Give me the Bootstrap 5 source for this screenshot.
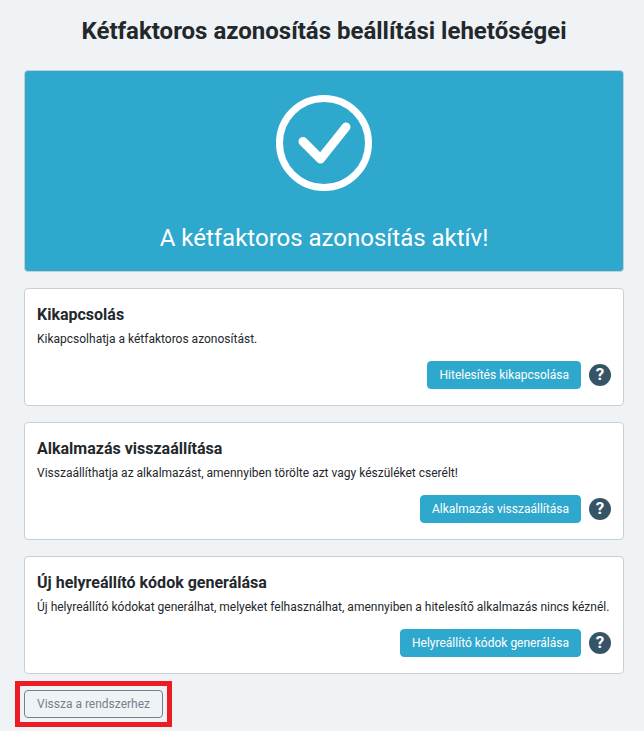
<!DOCTYPE html>
<html lang="hu">
<head>
  <meta charset="UTF-8">
  <title>Kétfaktoros azonosítás</title>
  <meta name="viewport" content="width=device-width, initial-scale=1">
  <link rel="stylesheet" href="https://cdn.jsdelivr.net/npm/bootstrap@5.3.3/dist/css/bootstrap.min.css">
  <style>
    html, body {
      height: 100%;
      overflow: hidden;
    }

    body {
      background-color: #f0f3f5;
      color: #23282c;
      font-family: Roboto, sans-serif;
      font-size: 12px;
    }

    .page-wrap {
      padding: 0 20px 0 24px;
    }

    .page-title {
      font-family: Roboto, sans-serif;
      font-size: 24px;
      font-weight: 700;
      line-height: 29px;
      margin: 0;
      padding: 17px 0 24px;
    }

    .hero-box {
      background-color: #2fa8cd;
      border: 1px solid #c8ced3;
      border-radius: 4px;
      height: 202px;
      margin-bottom: 16px;
      padding-top: 23px;
    }

    .hero-text {
      font-size: 24px;
      line-height: 29px;
      margin-top: 32px;
    }

    .opt-card {
      background-color: #fff;
      border: 1px solid #c8ced3;
      border-radius: 4px;
      height: 118px;
      margin-bottom: 16px;
      padding: 16px 12px 0;
    }

    .opt-title {
      font-family: Roboto, sans-serif;
      font-size: 16px;
      font-weight: 700;
      line-height: 19px;
      margin: 0 0 8px;
    }

    .opt-text {
      line-height: 15px;
      margin: 0 0 14px;
    }

    .btn-kek {
      background-color: #2fa8cd;
      border: 1px solid #2fa8cd;
      border-radius: 4px;
      color: #fff;
      font-size: 12px;
      font-weight: 400;
      line-height: 18px;
      padding: 4px 11px;
    }

    .btn-kek:hover {
      background-color: #2793b5;
      color: #fff;
    }

    .help-dot {
      align-items: center;
      background-color: #355566;
      border-radius: 50%;
      color: #fff;
      display: flex;
      font-size: 17px;
      font-weight: 700;
      height: 22px;
      justify-content: center;
      width: 22px;
    }

    .back-wrap {
      display: inline-block;
      margin-top: 0;
      position: relative;
    }

    .btn-vissza {
      border: 1px solid #73818f;
      border-radius: 4px;
      color: #73818f;
      font-size: 12px;
      line-height: 18px;
      padding: 4px 12px;
    }

    .red-mark {
      border: 5px solid #ed1c24;
      bottom: -9px;
      left: -9px;
      position: absolute;
      right: -9px;
      top: -9px;
    }
  </style>
</head>
<body>

<main class="page-wrap">
  <h1 class="page-title text-center">Kétfaktoros azonosítás beállítási lehetőségei</h1>

  <section class="hero-box text-center text-white">
    <svg width="98" height="98" viewBox="0 0 98 98" class="d-block mx-auto" fill="none" stroke="#fff">
      <circle cx="49" cy="49" r="44.5" stroke-width="7"/>
      <path d="M28 47.5 45.500 65 71 33" stroke-width="9" stroke-linecap="round" stroke-linejoin="round"/>
    </svg>
    <div class="hero-text">A kétfaktoros azonosítás aktív!</div>
  </section>

  <section class="opt-card">
    <h5 class="opt-title">Kikapcsolás</h5>
    <p class="opt-text">Kikapcsolhatja a kétfaktoros azonosítást.</p>
    <div class="d-flex justify-content-end align-items-center gap-2">
      <button type="button" class="btn btn-kek">Hitelesítés kikapcsolása</button>
      <span class="help-dot">?</span>
    </div>
  </section>

  <section class="opt-card">
    <h5 class="opt-title">Alkalmazás visszaállítása</h5>
    <p class="opt-text">Visszaállíthatja az alkalmazást, amennyiben törölte azt vagy készüléket cserélt!</p>
    <div class="d-flex justify-content-end align-items-center gap-2">
      <button type="button" class="btn btn-kek">Alkalmazás visszaállítása</button>
      <span class="help-dot">?</span>
    </div>
  </section>

  <section class="opt-card">
    <h5 class="opt-title">Új helyreállító kódok generálása</h5>
    <p class="opt-text">Új helyreállító kódokat generálhat, melyeket felhasználhat, amennyiben a hitelesítő alkalmazás nincs kéznél.</p>
    <div class="d-flex justify-content-end align-items-center gap-2">
      <button type="button" class="btn btn-kek">Helyreállító kódok generálása</button>
      <span class="help-dot">?</span>
    </div>
  </section>

  <div class="back-wrap">
    <button type="button" class="btn btn-vissza">Vissza a rendszerhez</button>
    <span class="red-mark"></span>
  </div>
</main>

</body>
</html>
